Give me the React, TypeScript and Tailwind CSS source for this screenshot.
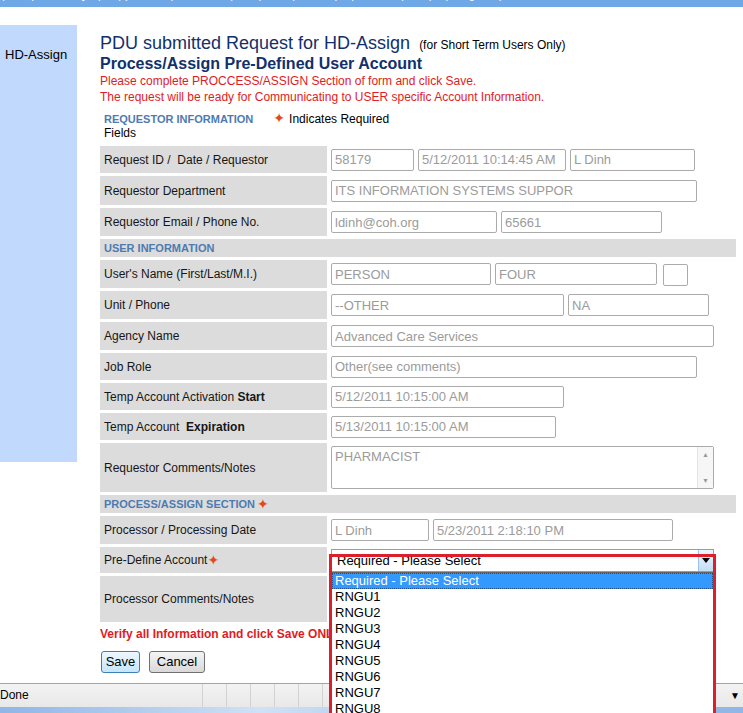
import type { ReactNode } from "react";

const starClass = "font-['DejaVu_Sans',sans-serif] text-[14px] leading-[12px] text-[#e4471c]";

const Field = ({ w, value }: { w: string; value: string }) => (
  <input
    readOnly
    value={value}
    className={`${w} h-[22px] shrink-0 rounded-[2px] border border-[#ababab] bg-white px-[3px] text-[13px] text-[#9b9b9b] outline-none`}
  />
);

const Row = ({ label, h, children }: { label: ReactNode; h: string; children?: ReactNode }) => (
  <div className={`flex ${h}`}>
    <div className="flex w-[227px] shrink-0 items-center whitespace-pre bg-[#dcdcdc] pl-1 text-[12px] text-[#161616]">
      {label}
    </div>
    <div className="ml-1 flex items-center gap-1">{children}</div>
  </div>
);

const SectionHead = ({ children }: { children: ReactNode }) => (
  <div className="flex h-[18px] items-center bg-[#dcdcdc] pl-1 text-[11px] font-bold text-[#4d7bb0]">
    {children}
  </div>
);

const options = ["RNGU1", "RNGU2", "RNGU3", "RNGU4", "RNGU5", "RNGU6", "RNGU7", "RNGU8", "RNGU9"];

const AccountSelect = () => (
  <div className="relative h-[23px] w-[383px] border border-[#7fa3c6] bg-white">
    <div className="pl-[5px] text-[13px] leading-[21px] text-black">Required - Please Select</div>
    <div className="absolute bottom-0 right-0 top-0 flex w-[15px] items-center justify-center border-l border-[#9dc2e6] bg-linear-to-b from-[#edf5fc] to-[#c3def5]">
      <svg width="8" height="5" viewBox="0 0 8 5">
        <path d="M0 0h8L4 5z" fill="#000" />
      </svg>
    </div>
    {/* open list */}
    <div className="absolute left-[-1px] top-[22px] z-20 h-[160px] w-[383px] border border-[#646464] bg-white">
      <div className="h-[16px] bg-[#3399ff] px-[3px] text-[13px] leading-[16px] text-white outline-1 outline-dotted outline-[#1b4f8a] -outline-offset-1">
        Required - Please Select
      </div>
      {options.map((o) => (
        <div key={o} className="h-[16px] px-[3px] text-[13px] leading-[16px] text-black">
          {o}
        </div>
      ))}
    </div>
    {/* red highlight box */}
    <div className="pointer-events-none absolute left-[-3px] top-[4px] z-30 h-[180px] w-[387px] border-[3px] border-[#dc1f2a]" />
  </div>
);

const Notes = ({ value }: { value: string }) => (
  <div className="flex h-[43px] w-[383px] rounded-[2px] border border-[#ababab] bg-white">
    <div className="flex-1 px-[3px] pt-[2px] text-[13px] leading-[16px] text-[#9b9b9b]">{value}</div>
    <div className="flex w-[16px] flex-col justify-between border-l border-[#e3e3e3] bg-[#f6f6f6] py-[3px] text-center text-[7px] leading-[9px] text-[#9a9a9a]">
      <span>▲</span>
      <span>▼</span>
    </div>
  </div>
);

export default function App() {
  return (
    <div className="relative flex h-[713px] w-[743px] flex-col overflow-hidden bg-white font-['Liberation_Sans',Arial,sans-serif] text-black">
      {/* top nav strip, mostly scrolled off */}
      <div className="h-[7px] shrink-0 overflow-hidden bg-[#6fa8e6]">
        <div className="-mt-[13px] whitespace-pre pl-[2px] text-[12px] leading-[14px] text-white">
          {"|  Request Entry   |   Approvals  |  Process  |   Reports  |  Lookup   |  Admin  |  Help   |  Logout  |"}
        </div>
      </div>

      <div className="flex min-h-0 flex-1">
        <aside className="mt-[18px] h-[437px] w-[77px] shrink-0 bg-[#c1d9fc] pl-[5px] pt-[22px] text-[13px] leading-[15px]">
          HD-Assign
        </aside>

        <main className="ml-[23px] pt-[26px]">
          <div className="flex items-baseline leading-[20px]">
            <span className="text-[18px] text-[#12306b]">PDU submitted Request for HD-Assign</span>
            <span className="ml-[9px] text-[12px]">(for Short Term Users Only)</span>
          </div>
          <div className="text-[16px] font-bold leading-[18px] text-[#12306b]">
            Process/Assign Pre-Defined User Account
          </div>
          <div className="text-[12px] leading-[16px] text-[#e01b24]">
            <div>Please complete PROCCESS/ASSIGN Section of form and click Save.</div>
            <div>The request will be ready for Communicating to USER specific Account Information.</div>
          </div>

          <div className="mt-[7px] pl-1 text-[12px] leading-[14px]">
            <div className="flex items-baseline">
              <span className="text-[11px] font-bold text-[#4d7bb0]">REQUESTOR INFORMATION</span>
              <span className={`ml-[20px] ${starClass}`}>✦</span>
              <span className="ml-[4px]">Indicates Required</span>
            </div>
            <div>Fields</div>
          </div>

          <div className="mt-[6px] flex w-[636px] flex-col gap-[3px]">
            <Row label="Request ID /  Date / Requestor" h="h-[27px]">
              <Field w="w-[83px]" value="58179" />
              <Field w="w-[148px]" value="5/12/2011 10:14:45 AM" />
              <Field w="w-[125px]" value="L Dinh" />
            </Row>
            <Row label="Requestor Department" h="h-[29px]">
              <Field w="w-[366px]" value="ITS INFORMATION SYSTEMS SUPPOR" />
            </Row>
            <Row label="Requestor Email / Phone No." h="h-[28px]">
              <Field w="w-[166px]" value="ldinh@coh.org" />
              <Field w="w-[161px]" value="65661" />
            </Row>

            <SectionHead>USER INFORMATION</SectionHead>
            <Row label="User's Name (First/Last/M.I.)" h="h-[28px]">
              <Field w="w-[160px]" value="PERSON" />
              <Field w="w-[162px]" value="FOUR" />
              <div className="ml-[2px]">
                <Field w="w-[25px]" value="" />
              </div>
            </Row>
            <Row label="Unit / Phone" h="h-[28px]">
              <Field w="w-[233px]" value="--OTHER" />
              <Field w="w-[141px]" value="NA" />
            </Row>
            <Row label="Agency Name" h="h-[28px]">
              <Field w="w-[383px]" value="Advanced Care Services" />
            </Row>
            <Row label="Job Role" h="h-[27px]">
              <Field w="w-[366px]" value="Other(see comments)" />
            </Row>
            <Row
              label={
                <>
                  Temp Account Activation <b>Start</b>
                </>
              }
              h="h-[27px]"
            >
              <Field w="w-[233px]" value="5/12/2011 10:15:00 AM" />
            </Row>
            <Row
              label={
                <>
                  {"Temp Account  "}
                  <b>Expiration</b>
                </>
              }
              h="h-[27px]"
            >
              <Field w="w-[225px]" value="5/13/2011 10:15:00 AM" />
            </Row>
            <Row label="Requestor Comments/Notes" h="h-[49px]">
              <Notes value="PHARMACIST" />
            </Row>

            <SectionHead>
              PROCESS/ASSIGN SECTION<span className={`ml-[2px] font-normal ${starClass}`}>✦</span>
            </SectionHead>
            <Row label="Processor / Processing Date" h="h-[28px]">
              <Field w="w-[98px]" value="L Dinh" />
              <Field w="w-[240px]" value="5/23/2011 2:18:10 PM" />
            </Row>
            <Row
              label={
                <>
                  Pre-Define Account<span className={starClass}>✦</span>
                </>
              }
              h="h-[26px]"
            >
              <AccountSelect />
            </Row>
            <Row label="Processor Comments/Notes" h="h-[46px]" />
          </div>

          <div className="mt-[5px] text-[12px] font-bold leading-[14px] text-[#e01b24]">
            Verify all Information and click Save ONLY when complete.
          </div>

          <div className="mt-[10px] flex gap-[9px] pl-px">
            <button className="h-[22px] w-[39px] rounded-[3px] border border-[#3c7fb1] bg-linear-to-b from-[#eef7fd] to-[#c6e6fb] text-[13px]">
              Save
            </button>
            <button className="h-[22px] w-[56px] rounded-[3px] border border-[#707070] bg-linear-to-b from-[#f4f4f4] to-[#d9d9d9] text-[13px]">
              Cancel
            </button>
          </div>
        </main>
      </div>

      {/* browser status bar */}
      <div className="flex h-[24px] shrink-0 border-t border-[#a3a3a3] bg-linear-to-b from-[#f3f3f3] to-[#e8e8e8] text-[12px] leading-[23px]">
        <div className="w-[202px]">Done</div>
        <div className="w-[24px] border-l border-[#d2d2d2]" />
        <div className="w-[24px] border-l border-[#d2d2d2]" />
        <div className="w-[24px] border-l border-[#d2d2d2]" />
        <div className="w-[24px] border-l border-[#d2d2d2]" />
        <div className="w-[24px] border-l border-[#d2d2d2]" />
        <div className="flex flex-1 justify-end border-l border-[#d2d2d2] pr-[3px] text-[10px]">▼</div>
      </div>
      <div className="h-[6px] shrink-0 bg-[linear-gradient(to_right,#8fb6e6,#cfe1f5_35%,#a9c7ec_60%,#8fb6e6)]" />
    </div>
  );
}
